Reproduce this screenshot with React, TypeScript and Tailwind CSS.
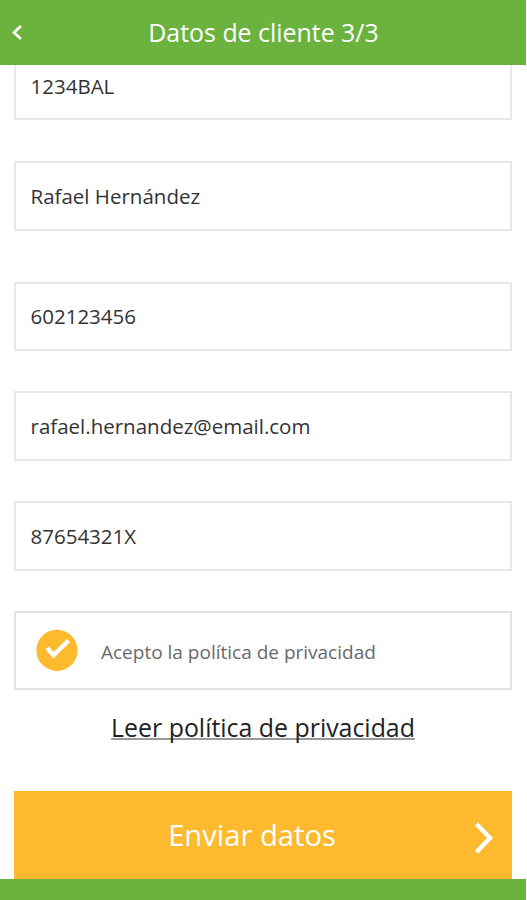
import React, { useState } from "react";

interface FieldProps {
  name: string;
  value: string;
  onChange: (e: React.ChangeEvent<HTMLInputElement>) => void;
  className?: string;
}

const Field: React.FC<FieldProps> = ({ name, value, onChange, className = "" }) => (
  <input
    type="text"
    name={name}
    value={value}
    onChange={onChange}
    className={`block w-full shrink-0 border-2 border-[#e8e8e8] bg-white pl-[14.5px] text-[20.5px] text-[#333333] outline-none ${className}`}
  />
);

const App: React.FC = () => {
  const [accepted, setAccepted] = useState<boolean>(true);
  const [formData, setFormData] = useState({
    plate: "1234BAL",
    name: "Rafael Hernández",
    phone: "602123456",
    email: "rafael.hernandez@email.com",
    document: "87654321X",
  });

  const handleChange = (e: React.ChangeEvent<HTMLInputElement>) => {
    const { name, value } = e.target;
    setFormData((prev) => ({ ...prev, [name]: value }));
  };

  return (
    <div className="flex h-[900px] w-[526px] flex-col overflow-hidden bg-white font-['Open_Sans',sans-serif]">
      <header className="grid h-[65px] shrink-0 grid-cols-[40px_1fr_40px] items-center bg-[#6bb33e] text-white">
        <button type="button" aria-label="Volver" className="pl-3">
          <svg width="11" height="16" viewBox="0 0 11 16" fill="none">
            <path d="M9 1 2 7.5l7 6.5" stroke="currentColor" strokeWidth="2.6" />
          </svg>
        </button>
        <h1 className="pl-px text-center text-[24.9px] leading-none">Datos de cliente 3/3</h1>
      </header>

      <form
        onSubmit={(e) => e.preventDefault()}
        className="flex min-h-0 flex-1 flex-col pr-3.5 pl-3.5"
      >
        <Field name="plate" value={formData.plate} onChange={handleChange} className="h-[55px] border-t-0 pb-3" />
        <Field name="name" value={formData.name} onChange={handleChange} className="mt-[41px] h-[70px]" />
        <Field name="phone" value={formData.phone} onChange={handleChange} className="mt-[51px] h-[69px] pb-0.5" />
        <Field name="email" value={formData.email} onChange={handleChange} className="mt-10 h-[70px]" />
        <Field name="document" value={formData.document} onChange={handleChange} className="mt-10 h-[70px] pb-px" />

        <label className="mt-10 flex h-[79px] shrink-0 items-center border-2 border-[#e2e2e2] pl-5">
          <input
            type="checkbox"
            checked={accepted}
            onChange={() => setAccepted((prev) => !prev)}
            className="sr-only"
          />
          <svg width="42" height="42" viewBox="0 0 42 42" fill="none" className="mb-0.5">
            <circle cx="21" cy="21.3" r="20.6" fill="#fdba2f" />
            {accepted && (
              <path
                d="m12.5 20.5 5 5.8L31 13"
                stroke="white"
                strokeWidth="4.4"
                strokeLinecap="square"
              />
            )}
          </svg>
          <span className="pt-1 pl-[23px] text-[19px] text-[#696969]">
            Acepto la política de privacidad
          </span>
        </label>

        <a href="#" className="mt-[19px] self-center text-[24.9px] leading-9 text-[#222222] underline decoration-[#999999] decoration-2 underline-offset-1 [text-decoration-skip-ink:none]">
          Leer política de privacidad
        </a>

        <button
          type="submit"
          className="mt-auto grid h-[88px] shrink-0 grid-cols-[26px_1fr_48px] items-center bg-[#fdba2f] text-white"
        >
          <span className="col-start-2 pt-0.5 text-[29.2px]">Enviar datos</span>
          <svg width="20" height="32" viewBox="0 0 20 32" fill="none" className="mt-1.5 ml-2.5">
            <path d="M2.5 2 16 16 2.5 30" stroke="currentColor" strokeWidth="4.5" />
          </svg>
        </button>
      </form>

      <footer className="h-[21px] shrink-0 bg-[#6bb33e]" />
    </div>
  );
};

export default App;
